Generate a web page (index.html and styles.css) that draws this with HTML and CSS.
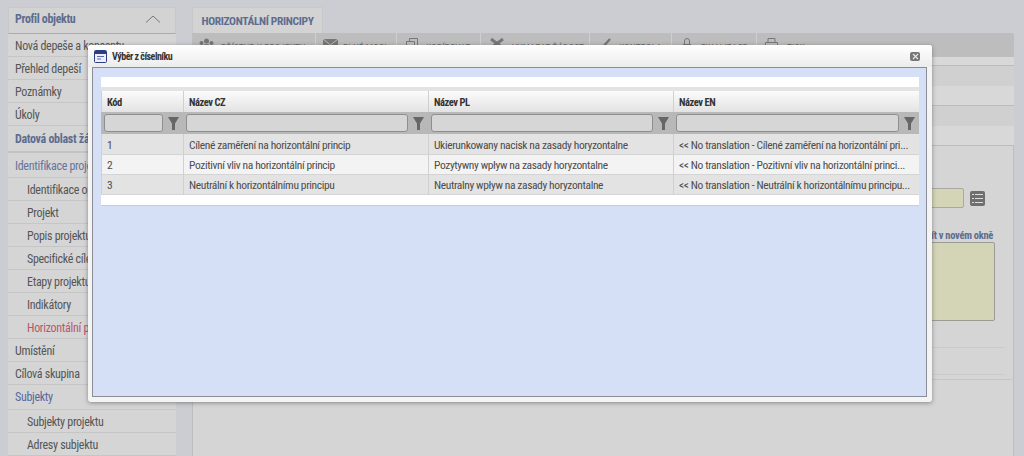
FILE: index.html
```html
<!DOCTYPE html>
<html lang="cs">
<head>
<meta charset="utf-8">
<title>Výběr z číselníku</title>
<link rel="stylesheet" href="styles.css">
</head>
<body>
<div class="page">
  <aside class="sidebar">
    <div class="side-head"><span>Profil objektu</span>
      <svg class="chev" width="16" height="8" viewBox="0 0 16 8"><path d="M1 7.500 8 1l7 6.500" fill="none" stroke="#777" stroke-width="1"/></svg>
    </div>
    <div class="item">Nová depeše a koncepty</div>
    <div class="item">Přehled depeší</div>
    <div class="item">Poznámky</div>
    <div class="item">Úkoly</div>
    <div class="item section">Datová oblast žádosti</div>
    <div class="item group">Identifikace projektu</div>
    <div class="item sub">Identifikace operace</div>
    <div class="item sub">Projekt</div>
    <div class="item sub">Popis projektu</div>
    <div class="item sub">Specifické cíle</div>
    <div class="item sub">Etapy projektu</div>
    <div class="item sub">Indikátory</div>
    <div class="item sub active">Horizontální principy</div>
    <div class="item">Umístění</div>
    <div class="item">Cílová skupina</div>
    <div class="item group2">Subjekty</div>
    <div class="item sub">Subjekty projektu</div>
    <div class="item sub">Adresy subjektu</div>
  </aside>
  <main class="content">
    <div class="tab">HORIZONTÁLNÍ PRINCIPY</div>
    <div class="toolbar">
      <div class="tool w1"><svg width="15" height="11" viewBox="0 0 15 11"><circle cx="7.500" cy="3" r="2.500" fill="#777"/><circle cx="2.500" cy="5" r="2" fill="#777"/><circle cx="12.500" cy="5" r="2" fill="#777"/><path d="M3 11c0-3 1.500-5 4.500-5s4.500 2 4.500 5z" fill="#777"/></svg><span>PŘÍSTUP K PROJEKTU</span></div>
      <div class="tool w2"><svg width="15" height="11" viewBox="0 0 15 11"><path d="M0 1h15v10H0z" fill="#777"/><path d="m0 1 7.500 6L15 1" fill="none" stroke="#bdbdbd"/></svg><span>PLNÉ MOCI</span></div>
      <div class="tool w3"><svg width="12" height="12" viewBox="0 0 12 12"><path d="M3.500 3V.5h8v8H9M.5 3.500h8v8h-8z" fill="none" stroke="#777"/></svg><span>KOPÍROVAT</span></div>
      <div class="tool w4"><svg width="14" height="11" viewBox="0 0 14 11"><path d="M1 1l12 9M13 1 1 10" stroke="#777" stroke-width="3"/></svg><span>VYMAZAT ŽÁDOST</span></div>
      <div class="tool w5"><svg width="13" height="11" viewBox="0 0 13 11"><path d="m1 8 3 2 8-9" fill="none" stroke="#777" stroke-width="2.500"/></svg><span>KONTROLA</span></div>
      <div class="tool w6"><svg width="8" height="12" viewBox="0 0 8 12"><path d="M1.500 6V3a2.500 2.500 0 0 1 5 0v3" fill="none" stroke="#777"/><path d="M0 6h8v6H0z" fill="#777"/></svg><span>FINALIZACE</span></div>
      <div class="tool w7"><svg width="13" height="12" viewBox="0 0 13 12"><path d="M3 4V.5h7V4M.5 4.500h12v5H.5z" fill="none" stroke="#777"/></svg><span>TISK</span></div>
    </div>
    <div class="bands">
      <div class="band light line"></div>
      <div class="band dark"></div>
      <div class="band light line"></div>
      <div class="band dark"></div>
      <div class="band light line"></div>
    </div>
    <div class="form">
      <div class="field-row">
        <div class="input"></div>
        <div class="list-btn"><svg width="11" height="9" viewBox="0 0 11 9"><path d="M0 .5h2M3 .5h8M0 4.500h2M3 4.500h8M0 8.500h2M3 8.500h8" stroke="#ddd"/></svg></div>
      </div>
      <div class="link-row"><a class="link">Otevřít v novém okně</a></div>
      <div class="textarea"></div>
      <div class="rule first"></div>
      <div class="rule"></div>
    </div>
    <div class="lower"></div>
  </main>
</div>

<div class="modal">
  <div class="modal-title">
    <svg class="win-icon" width="13" height="13" viewBox="0 0 13 13"><rect x=".5" y=".5" width="12" height="12" rx="1" fill="#eef" stroke="#2d3f7f"/><rect x="1" y="1" width="11" height="3" fill="#2d3f7f"/><path d="M3 6.500h7M3 9h4" stroke="#5a6ab0"/></svg>
    <span>Výběr z číselníku</span>
    <span class="close"><svg width="7" height="7" viewBox="0 0 7 7"><path d="m1 1 5 5M6 1 1 6" stroke="#e4e4e4" stroke-width="1.200"/></svg></span>
  </div>
  <div class="modal-body">
    <div class="strip"></div>
    <div class="gap"></div>
    <table class="grid">
      <colgroup><col class="c1"><col class="c2"><col class="c3"><col class="c4"></colgroup>
      <thead>
        <tr class="head"><th>Kód</th><th>Název CZ</th><th>Název PL</th><th>Název EN</th></tr>
        <tr class="filter">
          <td><div class="fcell"><div class="finput"></div><svg width="11" height="13" viewBox="0 0 11 13"><path d="M0 0h11L7 6.500V13H4V6.500z" fill="#666"/></svg></div></td>
          <td><div class="fcell"><div class="finput"></div><svg width="11" height="13" viewBox="0 0 11 13"><path d="M0 0h11L7 6.500V13H4V6.500z" fill="#666"/></svg></div></td>
          <td><div class="fcell"><div class="finput"></div><svg width="11" height="13" viewBox="0 0 11 13"><path d="M0 0h11L7 6.500V13H4V6.500z" fill="#666"/></svg></div></td>
          <td><div class="fcell"><div class="finput"></div><svg width="11" height="13" viewBox="0 0 11 13"><path d="M0 0h11L7 6.500V13H4V6.500z" fill="#666"/></svg></div></td>
        </tr>
      </thead>
      <tbody>
        <tr class="odd"><td>1</td><td>Cílené zaměření na horizontální princip</td><td>Ukierunkowany nacisk na zasady horyzontalne</td><td>&lt;&lt; No translation - Cílené zaměření na horizontální pri...</td></tr>
        <tr class="even"><td>2</td><td>Pozitivní vliv na horizontální princip</td><td>Pozytywny wpływ na zasady horyzontalne</td><td>&lt;&lt; No translation - Pozitivní vliv na horizontální princi...</td></tr>
        <tr class="odd"><td>3</td><td>Neutrální k horizontálnímu principu</td><td>Neutralny wpływ na zasady horyzontalne</td><td>&lt;&lt; No translation - Neutrální k horizontálnímu principu...</td></tr>
      </tbody>
    </table>
    <div class="strip bottom"></div>
  </div>
</div>
</body>
</html>
```
FILE: styles.css
```css
* { box-sizing: border-box; }
html, body { margin: 0; height: 100%; overflow: hidden; }
body {
  background: #cbcdd2;
  font-family: "Roboto Condensed", Roboto, sans-serif;
  font-size: 12px;
  letter-spacing: -.3px;
  color: #555;
}
.page {
  display: flex;
  gap: 16px;
  padding: 7px 10px 0 8px;
  height: 456px;
  overflow: hidden;
}
.sidebar { width: 168px; flex: none; }
.side-head {
  height: 27px;
  background: #d3d3d3;
  border: 1px solid #c8c8c8;
  border-bottom: 1px solid #aaa;
  border-radius: 2px 2px 0 0;
  display: flex;
  align-items: center;
  justify-content: space-between;
  padding: 0 14px 3px 6px;
  color: #5d6d8f;
  font-weight: bold;
  letter-spacing: -.35px;
}
.item {
  height: 23px;
  line-height: 24px;
  padding-left: 7px;
  background: #d5d5d5;
  border-bottom: 1px solid #c6c6c6;
  white-space: nowrap;
  overflow: hidden;
}
.section { color: #5d6d8f; font-weight: bold; height: 27px; line-height: 27px; border-bottom: 2px solid #c3c3c3; }
.group { color: #66749b; height: 25px; line-height: 26px; }
.group2 { color: #5a68a0; height: 25px; line-height: 25px; }
.sub { padding-left: 19px; }
.active { color: #b8566d; }
.content { flex: 1; min-width: 0; display: flex; flex-direction: column; }
.tab {
  width: 131px;
  height: 26px;
  line-height: 26px;
  text-align: center;
  background: #d3d3d3;
  border: 1px solid #c8c8c8;
  border-bottom: 0;
  border-radius: 2px 2px 0 0;
  color: #5d6d8f;
  font-weight: bold;
  font-size: 11.500px;
  letter-spacing: -.35px;
}
.toolbar {
  height: 25px;
  display: flex;
  background: #bdbdbd;
  border-radius: 0 2px 0 0;
  font-size: 9.500px;
  color: #6a6a6a;
}
.tool {
  display: flex;
  align-items: flex-start;
  padding-top: 5px;
  line-height: 14px;
  letter-spacing: .05px;
  border-right: 1px solid #cfcfcf;
  white-space: nowrap;
  overflow: hidden;
}
.tool svg { flex: none; }
.tool span { padding-top: 3px; }
.w1 { width: 124px; padding-left: 7px; gap: 7px; }
.w2 { width: 81px; padding-left: 7px; gap: 5px; }
.w3 { width: 84px; padding-left: 9px; gap: 8px; }
.w4 { width: 109px; padding-left: 9px; gap: 8px; }
.w5 { width: 82px; padding-left: 8px; gap: 8px; }
.w6 { width: 85px; padding-left: 11px; gap: 10px; }
.w7 { flex: 1; padding-left: 8px; gap: 9px; border-right: 0; }
.bands { display: flex; flex-direction: column; }
.band { height: 20px; }
.band:first-child { height: 9px; }
.light { background: #d8d8d8; }
.dark { background: #d0d0d0; }
.line { border-bottom: 1px solid #bcbcbc; }
.form {
  height: 241px;
  background: #d5d5d5;
  border-right: 1px solid #bdbdbd;
  border-left: 1px solid #bdbdbd;
  padding-top: 42px;
  display: flex;
  flex-direction: column;
  align-items: flex-end;
}
.field-row { display: flex; align-items: center; gap: 6px; padding-right: 28px; }
.input {
  width: 120px;
  height: 20px;
  background: #d4d4b6;
  border: 1px solid #a9a9a0;
  border-radius: 2px;
}
.list-btn {
  width: 15px;
  height: 15px;
  background: #6f6f6f;
  border-radius: 2px;
  display: flex;
  align-items: center;
  justify-content: center;
}
.link-row { padding: 20px 20px 0 0; height: 34px; line-height: 14px; }
.link { color: #5d6d8f; font-weight: bold; font-size: 10.500px; letter-spacing: -.3px; }
.textarea {
  width: 120px;
  height: 79px;
  margin-right: 18px;
  background: #d4d4b6;
  border: 1px solid #9c9c95;
  border-radius: 2px;
}
.rule { align-self: stretch; height: 1px; margin: 26px 8px 0 0; background: #cbcbcb; }
.lower {
  height: 80px;
  background: #d5d5d5;
  border-top: 1px solid #c6c6c6;
  border-left: 1px solid #bdbdbd;
  border-right: 1px solid #bdbdbd;
}
.modal {
  position: absolute;
  left: 88px;
  top: 45px;
  width: 844px;
  height: 357px;
  background: #f4f4f4;
  border-radius: 3px;
  box-shadow: 0 1px 4px rgba(60, 60, 60, .5);
  padding: 0 5px 5px 4px;
  display: flex;
  flex-direction: column;
}
.modal-title {
  height: 22px;
  flex: none;
  display: flex;
  align-items: center;
  gap: 5px;
  margin: 0 -5px 0 -4px;
  padding: 0 12px 0 6px;
  background: linear-gradient(#fff, #ececec);
  border-radius: 3px 3px 0 0;
  font-size: 10px;
  letter-spacing: -.5px;
  font-weight: bold;
  color: #333;
}
.win-icon { flex: none; }
.close {
  margin-left: auto;
  width: 10px;
  height: 9px;
  background: #777;
  border-radius: 2px;
  display: flex;
  align-items: center;
  justify-content: center;
}
.modal-body {
  flex: 1;
  background: #d5dff6;
  border: 1px solid #8a8d96;
  padding: 9px 7px 0 8px;
}
.strip { height: 10px; background: #fff; }
.gap { height: 4px; background: #e3e3e3; }
.strip.bottom { border-bottom: 1px solid #ccc; height: 11px; }
.grid {
  width: 818px;
  table-layout: fixed;
  border-collapse: separate;
  border-spacing: 0;
  font-size: 11.500px;
  letter-spacing: -.38px;
}
.c1 { width: 82px; }
.c2 { width: 245px; }
.c3 { width: 245px; }
.c4 { width: 246px; }
.grid th {
  height: 21px;
  padding: 2px 0 0 5px;
  text-align: left;
  font-size: 10.500px;
  letter-spacing: -.45px;
  color: #333;
  background: linear-gradient(#fbfbfb, #e3e3e3);
  border-left: 1px solid #d0d0d0;
}
.filter td { height: 22px; padding: 0 0 0 3px; background: #b8b8b8; }
.fcell { display: flex; align-items: center; gap: 5px; padding-right: 4px; }
.finput {
  flex: 1;
  height: 18px;
  background: #d6d6d6;
  border: 1px solid #8e8e8e;
  border-radius: 3px;
}
.grid tbody td {
  height: 20px;
  padding: 1px 0 0 5px;
  white-space: nowrap;
  overflow: hidden;
  color: #4c4c4c;
  border-left: 1px solid #d0d0d0;
  border-bottom: 1px solid #d4d4d4;
}
.grid tbody tr:first-child td { height: 21px; }
.odd td { background: #e3e3e3; }
.even td { background: #f3f3f3; }
```
